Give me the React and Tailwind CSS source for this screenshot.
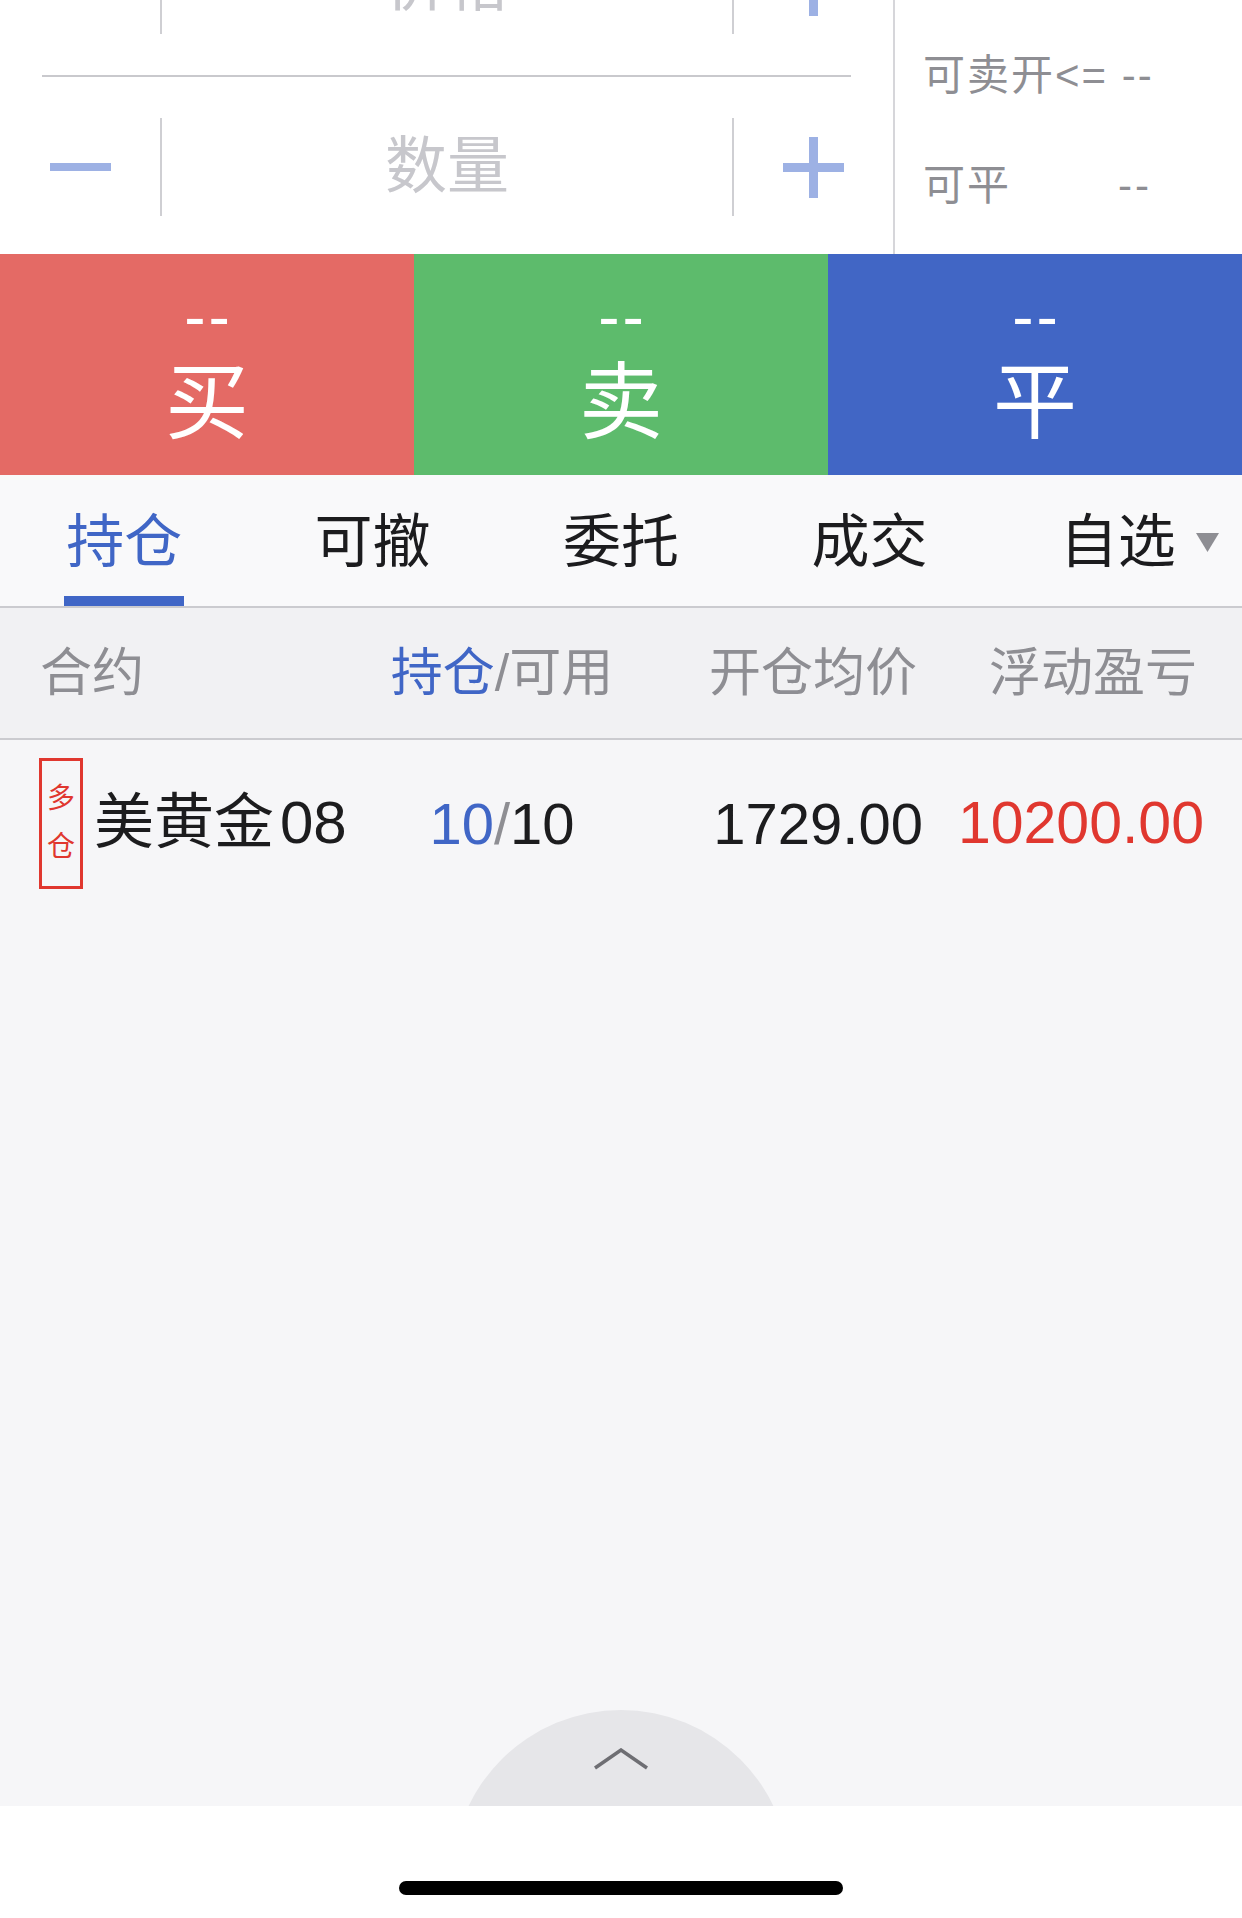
import React from 'react'

const cjk = "font-['Liberation_Sans','Noto_Sans_CJK_SC',sans-serif]"

function Stepper({ label }) {
    return (
        <div className="flex h-[180px] items-center">
            <div className="flex w-[160px] justify-center">
                <svg width="61" height="61" viewBox="0 0 61 61">
                    <rect x="0" y="26" width="61" height="8" fill="#9db1e4" />
                </svg>
            </div>
            <div className="h-[98px] w-[2px] bg-[#cfcfd3]" />
            <div className="flex-1 text-center text-[62px] leading-none text-[#c7c7cc]">{label}</div>
            <div className="h-[98px] w-[2px] bg-[#cfcfd3]" />
            <div className="flex w-[159px] justify-center">
                <svg width="61" height="61" viewBox="0 0 61 61">
                    <rect x="0" y="26" width="61" height="9" fill="#9db1e4" />
                    <rect x="26" y="0" width="9" height="61" fill="#9db1e4" />
                </svg>
            </div>
        </div>
    )
}

function TradeButton({ label, color }) {
    return (
        <div className={`flex flex-1 flex-col items-center text-white ${color}`}>
            <div className="mt-[41px] h-[44px] pl-[3px] text-[64px] leading-[44px] tracking-[3px]">--</div>
            <div className="mt-[22px] text-[84px] leading-none">{label}</div>
        </div>
    )
}

export default function App() {
    const tabs = ['持仓', '可撤', '委托', '成交', '自选']

    return (
        <div className={`flex h-[1918px] w-[1242px] flex-col bg-white ${cjk}`}>
            {/* Order entry */}
            <div className="flex h-[254px] overflow-hidden bg-white">
                <div className="w-[893px] -mt-[105px]">
                    <Stepper label="价格" />
                    <div className="mx-[42px] h-[2px] bg-[#c9c9cd]" />
                    <Stepper label="数量" />
                </div>
                <div className="w-[2px] bg-[#d6d6da]" />
                <div className="flex flex-1 flex-col pl-[28px] text-[42px] leading-none text-[#8e8e93]">
                    <div className="mt-[55px] whitespace-nowrap tracking-[2px]">可卖开&lt;= --</div>
                    <div className="mt-[68px] flex w-[229px] justify-between whitespace-nowrap">
                        <span className="tracking-[2px]">可平</span>
                        <span className="tracking-[3px]">--</span>
                    </div>
                </div>
            </div>

            {/* Buy / Sell / Close */}
            <div className="flex h-[221px]">
                <TradeButton label="买" color="bg-[#e46a65]" />
                <TradeButton label="卖" color="bg-[#5dbb6c]" />
                <TradeButton label="平" color="bg-[#4166c5]" />
            </div>

            {/* Tabs */}
            <div className="grid h-[133px] grid-cols-5 border-b-2 border-[#cbcbcf] bg-[#f9f9fa]">
                {tabs.map((t, i) => (
                    <div key={t} className="flex flex-col items-center">
                        <div className="relative mt-[37px] text-[58px] leading-[60px]">
                            <span className={i === 0 ? 'text-[#4066c6]' : 'text-[#1c1c1e]'}>{t}</span>
                            {i === 4 && (
                                <svg className="absolute left-[136px] top-[21px]" width="23" height="19" viewBox="0 0 23 19">
                                    <polygon points="0,0 23,0 11.5,19" fill="#8e8e93" />
                                </svg>
                            )}
                        </div>
                        {i === 0 && <div className="mt-auto h-[10px] w-[120px] bg-[#4066c6]" />}
                    </div>
                ))}
            </div>

            {/* Column header */}
            <div className="flex h-[132px] items-center border-b-2 border-[#cbcbcf] bg-[#f1f1f3] text-[52px] text-[#8e8e93]">
                <div className="w-[370px] pl-[40px]">合约</div>
                <div className="w-[264px] text-center">
                    <span className="text-[#4066c6]">持仓</span>/可用
                </div>
                <div className="w-[283px] text-right">开仓均价</div>
                <div className="w-[280px] text-right">浮动盈亏</div>
            </div>

            {/* Positions */}
            <div className="relative flex-1 overflow-hidden bg-[#f6f6f8]">
                <div className="flex h-[166px] items-center">
                    <div className="flex w-[370px] items-center">
                        <div className="ml-[39px] flex h-[131px] w-[44px] flex-col items-center justify-center gap-[18px] border-[3px] border-[#e0372f] text-[28px] leading-[30px] text-[#e0372f]">
                            <span>多</span>
                            <span>仓</span>
                        </div>
                        <div className="ml-[11px] text-[60px] text-[#1c1c1e]">美黄金<span className="ml-[6px]">08</span></div>
                    </div>
                    <div className="w-[264px] text-center text-[58px]">
                        <span className="text-[#4066c6]">10</span>
                        <span className="text-[#8e8e93]">/</span>
                        <span className="text-[#1c1c1e]">10</span>
                    </div>
                    <div className="w-[289px] text-right text-[58px] text-[#1c1c1e]">1729.00</div>
                    <div className="w-[281px] text-right text-[59px] text-[#e0372f]">10200.00</div>
                </div>

                <div className="absolute left-[452px] top-[970px] flex h-[338px] w-[338px] justify-center rounded-full bg-[#e6e6e9]">
                    <svg className="mt-[38px]" width="54" height="22" viewBox="0 0 54 22">
                        <polyline points="1,20 27,2 53,20" fill="none" stroke="#6e6e73" strokeWidth="3.5" />
                    </svg>
                </div>
            </div>

            {/* Home indicator */}
            <div className="flex h-[112px] justify-center bg-white pt-[75px]">
                <div className="h-[14px] w-[444px] rounded-full bg-black" />
            </div>
        </div>
    )
}
